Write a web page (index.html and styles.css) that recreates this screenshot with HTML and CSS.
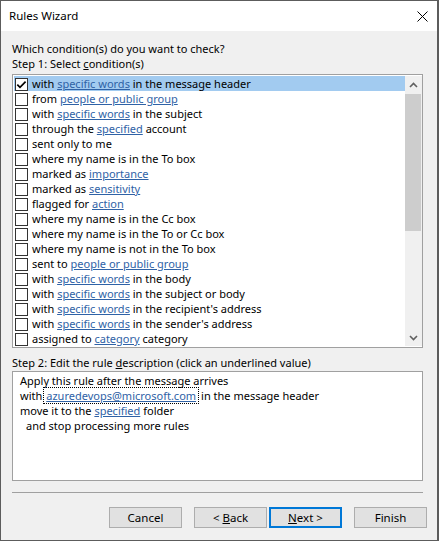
FILE: index.html
```html
<!DOCTYPE html>
<html>
<head>
<meta charset="utf-8">
<title>Rules Wizard</title>
<link rel="stylesheet" href="styles.css">
</head>
<body>
<div class="window">
  <div class="titlebar">
    <span class="title">Rules Wizard</span>
    <svg class="close" width="11" height="11" viewBox="0 0 11 11"><path d="M0.5 0.5 L10.5 10.5 M10.5 0.5 L0.5 10.5" stroke="#000" stroke-width="1" fill="none"/></svg>
  </div>
  <div class="content">
    <div class="prompt">Which condition(s) do you want to check?</div>
    <div class="label">Step 1: Select <u>c</u>ondition(s)</div>
    <div class="listbox">
      <ul class="items">
        <li class="item selected"><span class="cb"><svg width="11" height="11" viewBox="0 0 11 11"><path d="M1.3 5.6 L4 8.3 L9.6 2.6" stroke="#000" stroke-width="1.7" fill="none"/></svg></span><span>with <a>specific words</a> in the message header</span></li>
        <li class="item"><span class="cb"></span><span>from <a>people or public group</a></span></li>
        <li class="item"><span class="cb"></span><span>with <a>specific words</a> in the subject</span></li>
        <li class="item"><span class="cb"></span><span>through the <a>specified</a> account</span></li>
        <li class="item"><span class="cb"></span><span>sent only to me</span></li>
        <li class="item"><span class="cb"></span><span>where my name is in the To box</span></li>
        <li class="item"><span class="cb"></span><span>marked as <a>importance</a></span></li>
        <li class="item"><span class="cb"></span><span>marked as <a>sensitivity</a></span></li>
        <li class="item"><span class="cb"></span><span>flagged for <a>action</a></span></li>
        <li class="item"><span class="cb"></span><span>where my name is in the Cc box</span></li>
        <li class="item"><span class="cb"></span><span>where my name is in the To or Cc box</span></li>
        <li class="item"><span class="cb"></span><span>where my name is not in the To box</span></li>
        <li class="item"><span class="cb"></span><span>sent to <a>people or public group</a></span></li>
        <li class="item"><span class="cb"></span><span>with <a>specific words</a> in the body</span></li>
        <li class="item"><span class="cb"></span><span>with <a>specific words</a> in the subject or body</span></li>
        <li class="item"><span class="cb"></span><span>with <a>specific words</a> in the recipient's address</span></li>
        <li class="item"><span class="cb"></span><span>with <a>specific words</a> in the sender's address</span></li>
        <li class="item"><span class="cb"></span><span>assigned to <a>category</a> category</span></li>
      </ul>
      <div class="scrollbar">
        <div class="sb-btn"><svg width="9" height="6" viewBox="0 0 9 6"><path d="M1 5 L4.5 1.5 L8 5" stroke="#606060" stroke-width="1.6" fill="none"/></svg></div>
        <div class="sb-track"><div class="sb-thumb"></div></div>
        <div class="sb-btn"><svg width="9" height="6" viewBox="0 0 9 6"><path d="M1 1 L4.5 4.5 L8 1" stroke="#606060" stroke-width="1.6" fill="none"/></svg></div>
      </div>
    </div>
    <div class="label label2">Step 2: Edit the rule <u>d</u>escription (click an underlined value)</div>
    <div class="desc">
      <div class="line">Apply this rule after the message arrives</div>
      <div class="line">with<a class="focus">azuredevops@microsoft.com</a>in the message header</div>
      <div class="line">move it to the <a>specified</a> folder</div>
      <div class="line indent">and stop processing more rules</div>
    </div>
    <div class="sep"></div>
    <div class="buttons">
      <button class="btn">Cancel</button>
      <button class="btn gap-left">&lt; <u>B</u>ack</button>
      <button class="btn default"><u>N</u>ext &gt;</button>
      <button class="btn gap-left">Finish</button>
    </div>
  </div>
</div>
</body>
</html>
```

FILE: styles.css
```css
* { box-sizing: border-box; }
html, body { margin: 0; padding: 0; }
body {
  width: 439px;
  height: 541px;
  font-family: "Noto Sans", "Open Sans", sans-serif;
  font-size: 11px;
  color: #000;
  background: #2b2b2b;
}
.window {
  width: 439px;
  height: 541px;
  border: 1px solid #5c5c5c;
  border-right-width: 2px;
  background: #f0f0f0;
  display: flex;
  flex-direction: column;
}
.titlebar {
  height: 30px;
  background: #fff;
  display: flex;
  align-items: center;
  justify-content: space-between;
  padding: 0 9px 0 8px;
  flex: none;
}
.title { line-height: 16px; font-size: 11.5px; }
.close { display: block; }
.content {
  padding: 10px 14px 0 11px;
  display: flex;
  flex-direction: column;
}
.prompt { line-height: 15px; }
.label { line-height: 16px; }
.label2 { margin-top: 7px; }
u { text-decoration: underline; text-underline-offset: 1px; }
a {
  color: #2f62a6;
  text-decoration: underline;
  text-underline-offset: 1px;
}
.listbox {
  margin-top: 2px;
  height: 274px;
  border: 1px solid #a0a0a0;
  background: #fff;
  display: flex;
  padding: 1px 0 1px 1px;
}
.items {
  list-style: none;
  margin: 0;
  padding: 0;
  width: 391px;
  flex: none;
}
.item {
  height: 15px;
  line-height: 15px;
  display: flex;
  align-items: flex-start;
  white-space: nowrap;
}
.item.selected { background: #a2cbf0; }
.cb {
  width: 13px;
  height: 13px;
  margin: 2px 4px 0 1px;
  border: 1px solid #333;
  background: #fff;
  flex: none;
  display: flex;
  align-items: center;
  justify-content: center;
}
.cb svg { display: block; }
.scrollbar {
  width: 17px;
  flex: none;
  background: #f0f0f0;
  display: flex;
  flex-direction: column;
}
.sb-btn {
  height: 17px;
  display: flex;
  align-items: center;
  justify-content: center;
  flex: none;
}
.sb-btn svg { display: block; }
.sb-track {
  flex: 1;
  padding-top: 1px;
}
.sb-thumb {
  width: 16px;
  height: 137px;
  background: #cdcdcd;
}
.desc {
  height: 110px;
  border: 1px solid #a0a0a0;
  background: #fff;
  padding: 1px 7px 0 7px;
}
.line { line-height: 15px; white-space: nowrap; }
.indent { padding-left: 6px; }
.focus {
  outline: 1px dotted #000;
  outline-offset: 0;
  padding: 0 2px;
  margin: 0 3px 0 2px;
}
.sep {
  margin-top: 11px;
  height: 1px;
  background: #a0a0a0;
}
.buttons {
  margin-top: 14px;
  margin-right: -4px;
  display: flex;
  justify-content: flex-end;
  gap: 2px;
}
.btn {
  width: 73px;
  height: 21px;
  font-family: inherit;
  font-size: 11.5px;
  color: #000;
  background: #e1e1e1;
  border: 1px solid #adadad;
  padding: 0;
  margin: 0;
  line-height: 17px;
}
.btn.gap-left { margin-left: 10px; }
.btn.default { border: 2px solid #0078d7; }
```
